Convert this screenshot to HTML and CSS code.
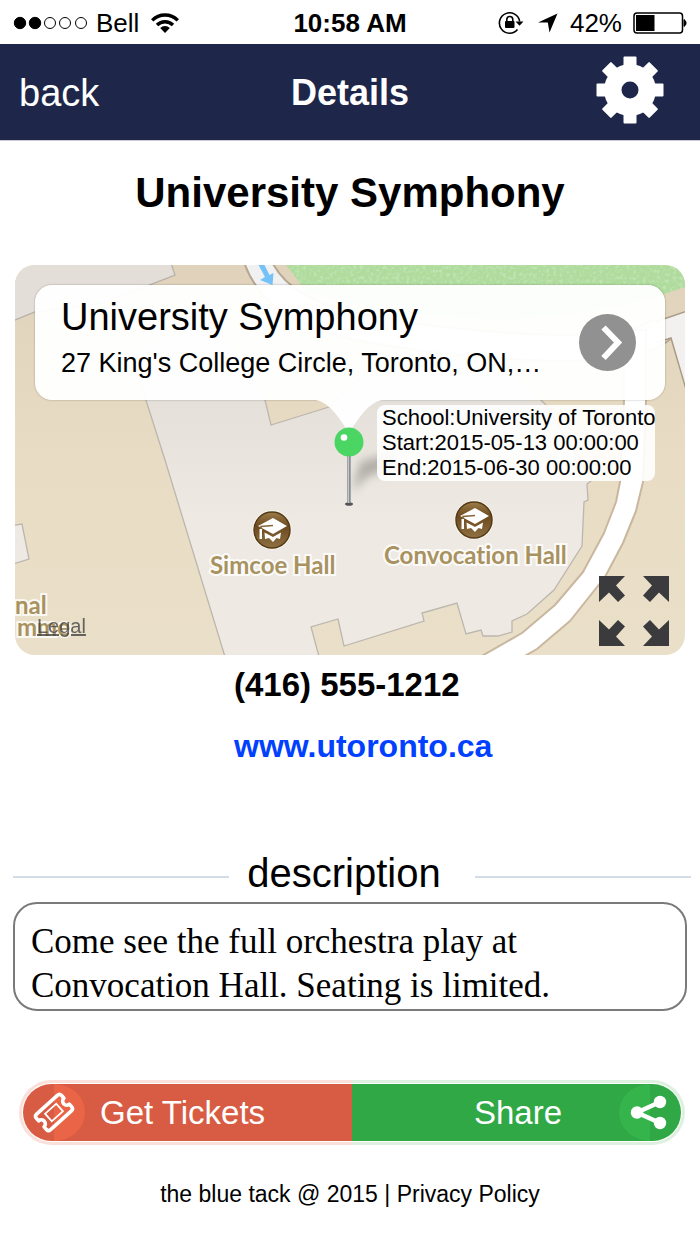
FILE: index.html
```html
<!DOCTYPE html>
<html lang="en">
<head>
<meta charset="utf-8">
<meta name="viewport" content="width=device-width, initial-scale=1">
<title>Details</title>
<link rel="stylesheet" href="styles.css">
</head>
<body>
<div class="status">
  <div class="status-left">
    <svg width="76" height="16" viewBox="0 0 76 16" aria-hidden="true"><g stroke="#000"><circle cx="8" cy="8" r="5.7"/><circle cx="23" cy="8" r="5.7"/><g fill="#fff"><circle cx="38" cy="8" r="5.5"/><circle cx="53" cy="8" r="5.5"/><circle cx="69" cy="8" r="5.5"/></g></g></svg>
    <span class="carrier">Bell</span>
    <svg width="28" height="20" viewBox="0 0 28 20" aria-hidden="true"><g fill="none" stroke="#000" stroke-width="3.4"><path d="M1.2 7.4A18 18 0 0 1 26.8 7.4"/><path d="M6 12A11.3 11.3 0 0 1 22 12"/></g><path d="M9.2 15A6.8 6.8 0 0 1 18.8 15L14 20Z"/></svg>
  </div>
  <span class="clock">10:58 AM</span>
  <div class="status-right">
    <svg width="26" height="24" viewBox="0 0 26 24" aria-hidden="true"><path d="M19.5 18.5A10.2 10.2 0 1 1 21.7 10.5" fill="none" stroke="#000" stroke-width="1.6"/><path d="M17.5 10.5H25.5L21.5 14.8Z"/><rect x="7" y="10" width="9.500" height="7" rx="1"/><path d="M8.800 10.500V8.500A3 3 0 0 1 14.800 8.500V10.500" fill="none" stroke="#000" stroke-width="1.600"/></svg>
    <svg width="20" height="20" viewBox="0 0 20 20" aria-hidden="true"><path d="M19.500 .5L0 9.500H9.800L11.500 19.500Z"/></svg>
    <span class="percent">42%</span>
    <svg width="56" height="22" viewBox="0 0 56 22" aria-hidden="true"><rect x="2" y="1" width="48.500" height="20" rx="3" fill="#fff" stroke="#000" stroke-width="1.500"/><rect x="4" y="3" width="18.500" height="16"/><path d="M52 7.500A4 4 0 0 1 52 14.500Z" stroke="#000"/></svg>
  </div>
</div>

<header class="nav">
  <a class="back" href="#">back</a>
  <h1 class="nav-title">Details</h1>
  <button class="gear" type="button" aria-label="Settings">
    <svg width="68" height="68" viewBox="-34 -34 68 68"><defs><path id="tooth" d="M-6.500 -22V-32.500Q-6.500 -33.500 -5.500 -33.500H5.500Q6.500 -33.500 6.500 -32.500V-22Z"/></defs><g fill="#fff"><circle r="26"/><use href="#tooth"/><use href="#tooth" transform="rotate(45)"/><use href="#tooth" transform="rotate(90)"/><use href="#tooth" transform="rotate(135)"/><use href="#tooth" transform="rotate(180)"/><use href="#tooth" transform="rotate(225)"/><use href="#tooth" transform="rotate(270)"/><use href="#tooth" transform="rotate(315)"/></g><circle r="8.500" fill="#1e274a"/></svg>
  </button>
</header>

<main class="content">
  <h2 class="event-title">University Symphony</h2>

  <section class="map" aria-label="Map">
    <svg class="map-art" viewBox="15 265 670 390" preserveAspectRatio="xMidYMid slice">
      <defs>
        <linearGradient id="land" x1="0" y1="0" x2="0" y2="1"><stop offset="0" stop-color="#e0d2bb"/><stop offset=".5" stop-color="#e8dcc4"/><stop offset="1" stop-color="#eadfc8"/></linearGradient>
        <linearGradient id="block" gradientUnits="userSpaceOnUse" x1="0" y1="380" x2="0" y2="520"><stop offset="0" stop-color="#e3dfd8"/><stop offset="1" stop-color="#eeeae3"/></linearGradient>
        <linearGradient id="badge" x1="0" y1="0" x2="0" y2="1"><stop offset="0" stop-color="#9c7c49"/><stop offset=".4" stop-color="#6b4a1e"/><stop offset="1" stop-color="#8f7144"/></linearGradient>
        <filter id="grass" x="0" y="0" width="1" height="1"><feTurbulence type="fractalNoise" baseFrequency=".3" numOctaves="2" seed="4"/><feColorMatrix values="0 0 0 0 1  0 0 0 0 1  0 0 0 0 1  2.400 0 0 0 -1.100"/><feComposite in2="SourceGraphic" operator="in"/></filter>
        <filter id="soft" x="-1" y="-1" width="3" height="3"><feGaussianBlur stdDeviation="5"/></filter>
        <g id="hall"><circle r="19.500" fill="#fff" opacity=".8"/><circle r="18" fill="url(#badge)" stroke="#553a14" stroke-width="1.500"/><path d="M-14 -4L1 -12L15 -4L1 4Z" fill="#fff"/><path d="M-7.500 2.500L1 7L9 2.500L8 9L4.500 8L1 12L-3 8L-7 9Z" fill="#fff"/><path d="M1 -4.500L-11 -3.500V1" fill="none" stroke="#86683a" stroke-width="1.600"/><path d="M-12.500 -1H-10V9H-12.500Z" fill="#fff"/></g>
      </defs>
      <rect x="15" y="265" width="670" height="390" fill="url(#land)"/>
      <path d="M10 260H170L175 275L103 303L35 312L10 322Z" fill="#e3ded7" stroke="#b7b2ab" stroke-width="1.300"/>
      <path d="M286 265L306 291Q500 345 664 294L685 287V265Z" fill="#afdc9d"/>
      <path d="M286 265L306 291Q500 345 664 294L685 287V265Z" fill="#fff" filter="url(#grass)" opacity=".3"/>
      <path d="M257 260Q275 308 350 325T530 347T662 329" fill="none" stroke="#b5a792" stroke-width="28"/>
      <path d="M257 260Q275 308 350 325T530 347T662 329" fill="none" stroke="#f1f1f1" stroke-width="24"/>
      <path d="M624 330V400L620 482L616 502L604 533L583 572L555 605L522 633L480 657H523L537 649L570 621L605 577L623 543L636 511L643 482L646 400V330Z" fill="#fff" stroke="#c9b79f" stroke-width="2" stroke-linejoin="round"/>
      <path d="M655 322L690 310V405L671 338L655 343Z" fill="#f2f1f0"/>
      <path d="M655 343L671 338L690 403M655 322L690 310" fill="none" stroke="#a99a86" stroke-width="1.500"/>
      <path d="M130 350L215 322L265 400L271 425L329 407L380 360L500 360L545 404L592 480L587 484L588 500L584 502L582 546L554 590L527 614L512 621V632L498 636H483L481 630L466 634L457 603L422 613L424 621L344 646L338 619L311 627L320 660H226L165 460Z" fill="url(#block)" stroke="#bbb6ae" stroke-width="1.300"/>
      <path d="M424 621L350 643L466 634Z" fill="none"/>
      <path d="M10 526L22 524L29 559L10 565Z" fill="#eeeae3" stroke="#bbb6ae" stroke-width="1.300"/>
      <path d="M258 264L265 277L260 280L272.500 285L273.500 273L269.500 275L264 264Z" fill="#74c2f7"/>
      <path d="M352 492L360 462L395 452V468L368 476Z" fill="#5d5a55" opacity=".4" filter="url(#soft)"/>
      <use href="#hall" x="272" y="530"/>
      <use href="#hall" x="474" y="520"/>
      <g class="map-label">
        <text x="210" y="574">Simcoe Hall</text>
        <text x="384" y="564">Convocation Hall</text>
        <text x="15" y="614">nal</text>
        <text x="17" y="636">mme</text>
      </g>
    </svg>
    <a class="legal" href="#">Legal</a>
    <div class="callout">
      <div class="callout-text">
        <p class="callout-title">University Symphony</p>
        <p class="callout-address">27 King's College Circle, Toronto, ON,…</p>
      </div>
      <button class="disclose" type="button" aria-label="Open place"><svg width="57" height="57" viewBox="0 0 57 57"><circle cx="28.500" cy="28.500" r="28.500" fill="#919191"/><path d="M24.500 13.500L39 28.500L24.500 44" fill="none" stroke="#fff" stroke-width="6"/></svg></button>
      <svg class="tail" width="66" height="34" viewBox="0 0 66 34" aria-hidden="true"><path d="M0 0Q10 2 19 13Q28 24 33 34Q38 24 47 13Q56 2 66 0Z" fill="#fff" fill-opacity=".96"/></svg>
    </div>
    <svg class="pin" width="30" height="80" viewBox="0 0 30 80" aria-hidden="true"><ellipse cx="15" cy="77" rx="4" ry="1.800" fill="#555"/><path d="M15 28V76" stroke="#8c9096" stroke-width="3.500"/><path d="M14.500 28V76" stroke="#c2c5c9"/><circle cx="15" cy="15" r="14.500" fill="#4bd663"/><circle cx="10" cy="10.500" r="3.300" fill="#fff"/></svg>
    <div class="tip">School:University of Toronto<br>Start:2015-05-13 00:00:00<br>End:2015-06-30 00:00:00</div>
    <button class="expand" type="button" aria-label="Full screen"><svg width="70" height="70" viewBox="-35 -35 70 70"><defs><path id="corner" d="M-35 -35H-9L-18 -25.500L-9 -15.500L-16 -9L-25 -18.500L-35 -9Z"/></defs><g fill="#3b3b3d"><use href="#corner"/><use href="#corner" transform="scale(-1 1)"/><use href="#corner" transform="scale(1 -1)"/><use href="#corner" transform="scale(-1 -1)"/></g></svg></button>
  </section>

  <div class="contact">
    <a class="phone" href="tel:4165551212">(416) 555-1212</a>
    <a class="site" href="#">www.utoronto.ca</a>
  </div>

  <h3 class="divider">description</h3>
  <p class="description">Come see the full orchestra play at Convocation Hall. Seating is limited.</p>

  <div class="actions">
    <button class="action tickets" type="button">
      <svg class="action-icon" width="62" height="57" viewBox="-31 -28.500 62 57" aria-hidden="true"><path d="M0 -28.500A31 28.500 0 0 1 0 28.500Z" fill="#ea6447"/><g transform="rotate(-42)" fill="none" stroke="#fff"><path d="M-14 -10.500H14Q17 -10.500 17 -7.500V-4A4 4 0 0 0 17 4V7.500Q17 10.500 14 10.500H-14Q-17 10.500 -17 7.500V4A4 4 0 0 0 -17 -4V-7.500Q-17 -10.500 -14 -10.500Z" stroke-width="3.600" stroke-linejoin="round"/><rect x="-7.500" y="-5" width="15" height="10" stroke-width="1.800"/></g></svg>
      <span>Get Tickets</span>
    </button>
    <button class="action share" type="button">
      <span>Share</span>
      <svg class="action-icon" width="62" height="57" viewBox="-31 -28.500 62 57" aria-hidden="true"><path d="M0 -28.500A31 28.500 0 0 0 0 28.500Z" fill="#35b44b"/><path d="M10 -10.500L-13 0L10 10.500" fill="none" stroke="#fff" stroke-width="4.500"/><g fill="#fff"><circle cx="-13" r="6.200"/><circle cx="10" cy="-10.500" r="6.200"/><circle cx="10" cy="10.500" r="6.200"/></g></svg>
    </button>
  </div>
</main>

<footer class="footer">the blue tack @ 2015 | <a href="#">Privacy Policy</a></footer>
</body>
</html>
```
FILE: styles.css
```css
* { box-sizing: border-box; }
body {
  margin: 0;
  background: #fff;
  color: #000;
  font-family: "Liberation Sans", Arial, sans-serif;
}
h1, h2, h3, p { margin: 0; }
a { color: inherit; text-decoration: none; }
button {
  padding: 0;
  border: 0;
  background: none;
  color: inherit;
  font: inherit;
  cursor: pointer;
}
svg { display: block; }

.status {
  display: grid;
  grid-template-columns: 1fr auto 1fr;
  align-items: center;
  height: 44px;
  padding: 2px 12px 0;
  font-size: 26px;
}
.status-left, .status-right { display: flex; align-items: center; }
.status-left { gap: 12px; }
.carrier { margin-left: -4px; }
.status-right { justify-content: flex-end; gap: 10px; }
.status-right svg:nth-child(2) { margin: 0 2px 0 4px; }
.clock { font-weight: bold; }

.nav {
  display: grid;
  grid-template-columns: 1fr auto 1fr;
  align-items: center;
  height: 97px;
  padding: 0 36px 0 19px;
  background: #1e274a;
  border-bottom: 1px solid #cfc9d3;
  color: #fff;
}
.back { padding-top: 2px; font-size: 38px; }
.nav-title { padding: 2px 0 0 17px; font-size: 36px; }
.gear { justify-self: end; padding-bottom: 4px; }

.content { padding: 0 15px; }
.event-title {
  padding: 28px 0 48px;
  font-size: 42px;
  line-height: 48px;
  text-align: center;
}

.map {
  position: relative;
  aspect-ratio: 670 / 390;
  overflow: hidden;
  border-radius: 20px;
}
.map-art { width: 100%; height: 100%; }
.map-label {
  fill: #a8925f;
  stroke: #fff;
  stroke-width: 4px;
  stroke-opacity: .8;
  paint-order: stroke;
  font-family: Lato, sans-serif;
  font-size: 24px;
  font-variant-ligatures: none;
  font-weight: bold;
}
.legal {
  position: absolute;
  left: 22px;
  bottom: 18px;
  color: #444;
  font-size: 20px;
  line-height: 22px;
  text-decoration: underline;
  opacity: .8;
}
.callout {
  position: absolute;
  top: 20px;
  left: 20px;
  right: 20px;
  display: flex;
  align-items: center;
  justify-content: space-between;
  height: 115px;
  padding: 0 29px 0 26px;
  border-radius: 17px;
  background: rgba(255, 255, 255, .96);
  box-shadow: 0 0 2px rgba(0, 0, 0, .35);
}
.callout-text { min-width: 0; white-space: nowrap; }
.callout-title { font-size: 38px; line-height: 48px; }
.callout-address { font-size: 27px; line-height: 44px; padding-bottom: 8px; }
.tail {
  position: absolute;
  top: 100%;
  left: 50%;
  margin-left: -34px;
}
.pin {
  position: absolute;
  top: 162px;
  left: 50%;
  margin-left: -16px;
}
.tip {
  position: absolute;
  top: 140px;
  right: 30px;
  padding: 0 0 1px 5px;
  width: 278px;
  border-radius: 8px;
  background: rgba(255, 255, 255, .9);
  font-size: 22px;
  line-height: 25px;
  white-space: nowrap;
}
.expand {
  position: absolute;
  right: 16px;
  bottom: 9px;
}

.contact {
  display: grid;
  justify-items: start;
  gap: 25px;
  padding: 12px 0 0 219px;
  font-size: 32px;
  font-weight: bold;
  line-height: 36px;
}
.phone { font-size: 33px; }
.site { color: #0040ff; }

.divider {
  display: flex;
  align-items: center;
  gap: 18px;
  margin: 84px -6px 0 -2px;
  font-size: 40px;
  font-weight: normal;
  line-height: 50px;
}
.divider::before, .divider::after {
  content: "";
  flex: 1;
  height: 2px;
  margin-top: 7px;
  background: #d2dde8;
}
.divider::after { margin-left: 16px; }
.description {
  margin: 4px -2px 0;
  padding: 16px 100px 1px 16px;
  border: 2px solid #7a7a7a;
  border-radius: 24px;
  font-family: "Liberation Serif", "Times New Roman", serif;
  font-size: 35px;
  line-height: 44px;
}

.actions {
  display: flex;
  margin: 73px 4px 0 8px;
  border-radius: 31px;
  color: #fff;
  font-size: 33px;
}
.action {
  display: flex;
  flex: 1;
  align-items: center;
  height: 57px;
}
.tickets {
  gap: 15px;
  border-radius: 31px 0 0 31px;
  background: #d85c43;
  box-shadow: 0 0 0 1px #fff, 0 0 0 4px #fae0da;
}
.share {
  justify-content: flex-end;
  gap: 57px;
  border-radius: 0 31px 31px 0;
  background: #2fa845;
  box-shadow: 0 0 0 1px #fff, 0 0 0 4px #def1e0;
  clip-path: inset(-5px -5px -5px 0);
}

.footer {
  padding: 40px 0 34px;
  font-size: 23px;
  line-height: 26px;
  text-align: center;
}
```
